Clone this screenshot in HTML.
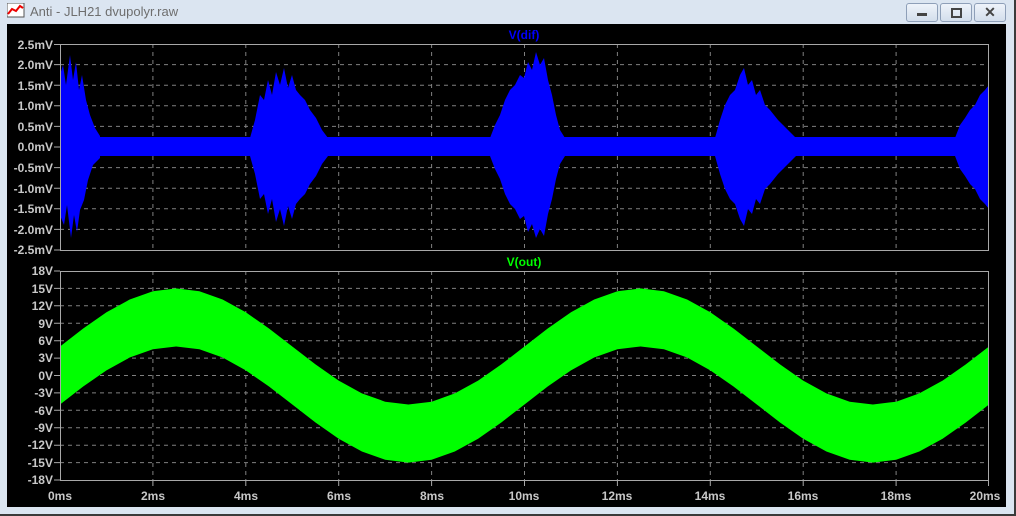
<!DOCTYPE html>
<html><head><meta charset="utf-8"><style>
body{margin:0;width:1016px;height:516px;overflow:hidden;background:#dbe5f1;font-family:"Liberation Sans",sans-serif;position:relative}
.title{position:absolute;left:30px;top:4px;font-size:13px;color:#6e6e6e}
.btn{position:absolute;top:3px;width:30px;height:17px;border:1px solid #8e9fb8;border-radius:3px;background:linear-gradient(#eef3fa,#d3deec)}
</style></head><body>
<svg style="position:absolute;left:7px;top:3px" width="18" height="15"><rect x="0" y="0" width="17" height="14" fill="#fff" stroke="#555"/><polyline points="1,11 5,6 9,8 13,3 16,5" fill="none" stroke="#e00" stroke-width="2"/></svg>
<div class="title">Anti - JLH21 dvupolyr.raw</div>
<div class="btn" style="left:906px"><div style="position:absolute;left:10px;top:9px;width:10px;height:3px;background:#444"></div></div>
<div class="btn" style="left:940px"><div style="position:absolute;left:10px;top:4px;width:7px;height:6px;border:2px solid #444"></div></div>
<div class="btn" style="left:974px;font-size:14px;font-weight:bold;color:#444;text-align:center;line-height:17px">✕</div>
<div style="position:absolute;left:0;top:514px;width:1016px;height:2px;background:#3a3a3a"></div>
<div style="position:absolute;left:1014px;top:0;width:2px;height:516px;background:#3a3a3a"></div>
<svg style="position:absolute;left:0;top:0" width="1016" height="516" font-family="Liberation Sans, sans-serif" font-size="12" font-weight="bold">
<rect x="7" y="24" width="999" height="483" fill="#000"/>
<g stroke="#808080" stroke-dasharray="4,4" stroke-width="1">
<path d="M152.9 44V250M245.8 44V250M338.7 44V250M431.6 44V250M524.5 44V250M617.4 44V250M710.3 44V250M803.2 44V250M896.1 44V250"/>
<path d="M60 64.6H989M60 85.2H989M60 105.8H989M60 126.4H989M60 147H989M60 167.6H989M60 188.2H989M60 208.8H989M60 229.4H989"/>
<path d="M152.9 271V480M245.8 271V480M338.7 271V480M431.6 271V480M524.5 271V480M617.4 271V480M710.3 271V480M803.2 271V480M896.1 271V480"/>
<path d="M60 288.4H989M60 305.8H989M60 323.3H989M60 340.7H989M60 358.1H989M60 375.5H989M60 392.9H989M60 410.3H989M60 427.8H989M60 445.2H989M60 462.6H989"/>
</g>
<path fill="#0000ff" d="M60 137H989V156H60Z
M60 75L63 65L66 85L70 55L73 80L76 62L79 90L82 75L86 100L90 115L95 128L100 136L100 158L93 165L88 180L84 200L80 210L77 232L74 215L71 238L67 205L64 225L60 215Z
M250 138L255 120L260 95L264 100L268 80L272 95L276 72L280 85L284 68L288 88L292 75L296 90L300 95L305 100L310 110L316 118L322 130L328 138L328 156L322 164L316 176L310 184L305 194L300 199L296 204L292 219L288 206L284 226L280 209L276 222L272 199L268 214L264 194L260 199L255 174L250 156Z
M490 138L495 125L500 115L505 100L510 90L515 85L520 75L524 78L528 62L532 70L536 52L540 65L544 58L548 80L552 95L556 115L560 130L565 138L565 156L560 164L556 179L552 199L548 214L544 236L540 229L536 238L532 224L528 232L524 216L520 219L515 209L510 204L505 194L500 179L495 169L490 156Z
M715 138L720 120L725 105L730 95L735 90L740 75L744 68L748 85L752 80L756 95L760 90L765 105L770 110L778 120L788 130L796 138L796 156L788 164L778 174L770 184L765 189L760 204L756 199L752 214L748 209L744 226L740 219L735 204L730 199L725 189L720 174L715 156Z
M955 138L960 125L965 118L970 110L975 105L980 95L985 90L989 85L989 209L985 204L980 199L975 189L970 184L965 176L960 169L955 156Z"/>
<path fill="#00ff00" d="M60 346.5L83.2 328.5L106.5 312.3L129.7 299.5L152.9 291.3L176.1 288.4L199.4 291.3L222.6 299.5L245.8 312.3L269 328.5L292.3 346.5L315.5 364.4L338.7 380.6L361.9 393.4L385.2 401.7L408.4 404.5L431.6 401.7L454.8 393.4L478.1 380.6L501.3 364.4L524.5 346.5L547.7 328.5L571 312.3L594.2 299.5L617.4 291.3L640.6 288.4L663.9 291.3L687.1 299.5L710.3 312.3L733.5 328.5L756.8 346.5L780 364.4L803.2 380.6L826.4 393.4L849.7 401.7L872.9 404.5L896.1 401.7L919.3 393.4L942.6 380.6L965.8 364.4L989 346.5
L989 404.5L965.8 422.5L942.6 438.7L919.3 451.5L896.1 459.8L872.9 462.6L849.7 459.8L826.4 451.5L803.2 438.7L780 422.5L756.8 404.5L733.5 386.5L710.3 370.4L687.1 357.5L663.9 349.3L640.6 346.5L617.4 349.3L594.2 357.5L571 370.4L547.7 386.5L524.5 404.5L501.3 422.5L478.1 438.7L454.8 451.5L431.6 459.8L408.4 462.6L385.2 459.8L361.9 451.5L338.7 438.7L315.5 422.5L292.3 404.5L269 386.5L245.8 370.4L222.6 357.5L199.4 349.3L176.1 346.5L152.9 349.3L129.7 357.5L106.5 370.4L83.2 386.5L60 404.5Z"/>
<rect x="60.5" y="44.5" width="928" height="206" fill="none" stroke="#a8a8a8"/>
<rect x="60.5" y="271.5" width="928" height="209" fill="none" stroke="#a8a8a8"/>
<g stroke="#a8a8a8"><path d="M54 44.5H60M54 64.6H60M54 85.2H60M54 105.8H60M54 126.4H60M54 147H60M54 167.6H60M54 188.2H60M54 208.8H60M54 229.4H60M54 250H60M54 271H60M54 288.4H60M54 305.8H60M54 323.3H60M54 340.7H60M54 358.1H60M54 375.5H60M54 392.9H60M54 410.3H60M54 427.8H60M54 445.2H60M54 462.6H60M54 480H60M152.9 480V486M245.8 480V486M338.7 480V486M431.6 480V486M524.5 480V486M617.4 480V486M710.3 480V486M803.2 480V486M896.1 480V486M988.5 480V486"/></g>
<g fill="#c8c8c8" text-anchor="end">
<text x="53" y="49">2.5mV</text><text x="53" y="69">2.0mV</text><text x="53" y="90">1.5mV</text><text x="53" y="110">1.0mV</text><text x="53" y="131">0.5mV</text><text x="53" y="151">0.0mV</text><text x="53" y="172">-0.5mV</text><text x="53" y="193">-1.0mV</text><text x="53" y="213">-1.5mV</text><text x="53" y="234">-2.0mV</text><text x="53" y="254">-2.5mV</text>
<text x="53" y="275">18V</text><text x="53" y="293">15V</text><text x="53" y="310">12V</text><text x="53" y="328">9V</text><text x="53" y="345">6V</text><text x="53" y="362">3V</text><text x="53" y="380">0V</text><text x="53" y="397">-3V</text><text x="53" y="415">-6V</text><text x="53" y="432">-9V</text><text x="53" y="449">-12V</text><text x="53" y="467">-15V</text><text x="53" y="484">-18V</text>
</g>
<g fill="#c8c8c8" text-anchor="middle">
<text x="60" y="500">0ms</text><text x="153" y="500">2ms</text><text x="246" y="500">4ms</text><text x="339" y="500">6ms</text><text x="432" y="500">8ms</text><text x="524" y="500">10ms</text><text x="617" y="500">12ms</text><text x="710" y="500">14ms</text><text x="803" y="500">16ms</text><text x="896" y="500">18ms</text><text x="985" y="500">20ms</text>
</g>
<text x="524" y="39" fill="#0000ff" text-anchor="middle">V(dif)</text>
<text x="524" y="266" fill="#00ff00" text-anchor="middle">V(out)</text>
</svg>
</body></html>
